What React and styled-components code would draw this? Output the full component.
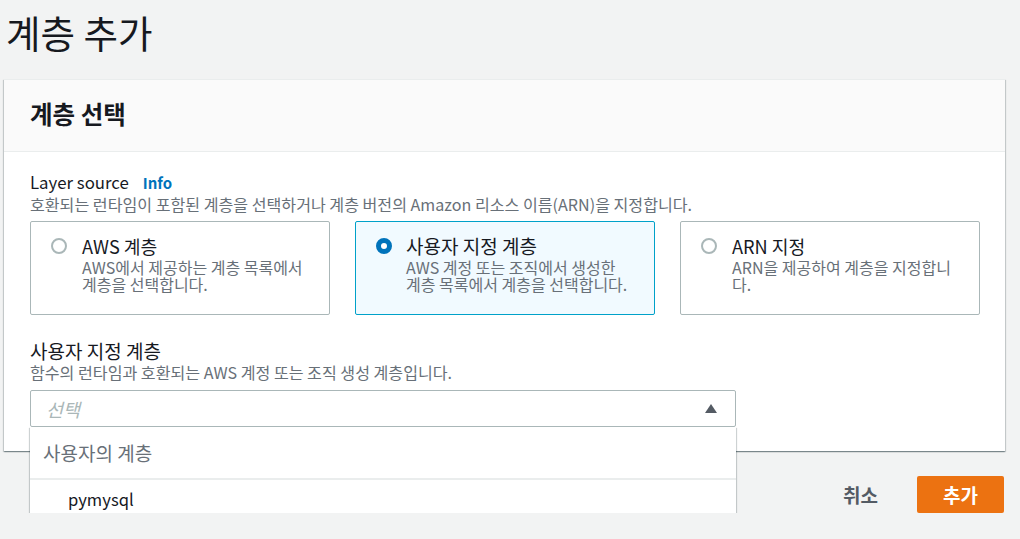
import React from "react";
import styled, { createGlobalStyle } from "styled-components";

const GlobalStyle = createGlobalStyle`
  html, body {
    margin: 0;
    padding: 0;
    background: #f2f3f3;
    min-height: 100%;
  }
  body {
    font-family: "Noto Sans CJK KR", "Noto Sans", sans-serif;
    color: #16191f;
    -webkit-font-smoothing: antialiased;
  }
  * { box-sizing: border-box; }
`;

const Page = styled.div`
  width: 1001px;
  margin-left: 4px;
  padding-top: 11px;
  display: flex;
  flex-direction: column;
`;

const PageTitle = styled.h1`
  margin: 0 0 26px 2px;
  font-size: 37.5px;
  line-height: 42px;
  font-weight: 400;
  color: #16191f;
`;

const Container = styled.section`
  background: #ffffff;
  border-top: 1px solid #eaeded;
  box-shadow: 0 1px 1px 0 rgba(0, 28, 36, 0.3), 1px 1px 1px 0 rgba(0, 28, 36, 0.15),
    -1px 1px 1px 0 rgba(0, 28, 36, 0.15);
`;

const ContainerHeader = styled.header`
  background: #fafafa;
  border-bottom: 1px solid #eaeded;
  padding: 19px 26px 22px;
`;

const HeaderTitle = styled.h2`
  margin: 0;
  font-size: 24.5px;
  line-height: 30px;
  font-weight: 700;
  color: #16191f;
`;

const ContainerBody = styled.div`
  padding: 19px 25px 24px 26px;
  display: flex;
  flex-direction: column;
`;

const Label = styled.div`
  display: flex;
  align-items: baseline;
  font-size: ${(p) => (p.$ko ? "19px" : "16.8px")};
  line-height: 22px;
  color: #16191f;
  margin-top: ${(p) => p.$top || 0}px;
`;

const InfoLink = styled.a`
  margin-left: 14px;
  font-size: 15px;
  font-weight: 700;
  color: #0073bb;
  text-decoration: none;
`;

const Description = styled.div`
  font-size: 16.1px;
  line-height: 20px;
  color: #687078;
`;

const Tiles = styled.div`
  margin-top: 7px;
  display: grid;
  grid-template-columns: repeat(3, 300px);
  column-gap: 25px;
`;

const Tile = styled.div`
  height: 94px;
  display: flex;
  align-items: flex-start;
  padding: 13px 20px 0 20px;
  border: 1px solid ${(p) => (p.$selected ? "#00a1c9" : "#aab7b8")};
  background: ${(p) => (p.$selected ? "#f1faff" : "#ffffff")};
  border-radius: 2px;
`;

const Radio = styled.span`
  flex: none;
  width: 16px;
  height: 16px;
  margin-top: 3px;
  margin-right: ${(p) => (p.$checked ? "14px" : "15px")};
  border-radius: 50%;
  background: #ffffff;
  border: ${(p) => (p.$checked ? "5px solid #0073bb" : "2px solid #aab7b8")};
`;

const TileText = styled.div`
  display: flex;
  flex-direction: column;
`;

const TileTitle = styled.div`
  font-size: ${(p) => (p.$latin ? "18.2px" : "19px")};
  line-height: 22px;
  color: #16191f;
`;

const TileDesc = styled.div`
  margin-top: 2px;
  font-size: 16px;
  line-height: 17px;
  color: #687078;
`;

const SelectWrap = styled.div`
  position: relative;
  width: 706px;
  margin-top: 8px;
`;

const SelectBox = styled.div`
  height: 37px;
  border: 1px solid #aab7b8;
  border-radius: 2px;
  background: #ffffff;
  display: flex;
  align-items: center;
  justify-content: space-between;
  padding: 0 18px 0 15px;
`;

const Placeholder = styled.span`
  font-size: 18.5px;
  font-style: italic;
  color: #aab7b8;
`;

const Caret = styled.svg`
  width: 12px;
  height: 9px;
  display: block;
`;

const Menu = styled.div`
  position: absolute;
  left: 0;
  right: 0;
  top: 37px;
  background: #ffffff;
  z-index: 2;
  box-shadow: 0 1px 1px 0 rgba(0, 28, 36, 0.3), 1px 1px 1px 0 rgba(0, 28, 36, 0.15),
    -1px 1px 1px 0 rgba(0, 28, 36, 0.15);
  display: flex;
  flex-direction: column;
`;

const MenuGroup = styled.div`
  height: 53px;
  display: flex;
  align-items: center;
  padding-left: 13px;
  font-size: 19px;
  color: #687078;
  border-bottom: 2px solid #eaeded;
`;

const MenuOption = styled.div`
  height: 37px;
  display: flex;
  align-items: center;
  padding-left: 38px;
  font-size: 16.6px;
  color: #16191f;
`;

const Footer = styled.div`
  margin-top: 25px;
  display: flex;
  justify-content: flex-end;
  align-items: center;
  gap: 19px;
  padding-right: 1px;
`;

const LinkButton = styled.button`
  border: none;
  background: transparent;
  font-family: inherit;
  font-size: 19px;
  font-weight: 700;
  color: #545b64;
  padding: 0 20px;
  height: 37px;
  cursor: pointer;
`;

const PrimaryButton = styled.button`
  width: 87px;
  height: 37px;
  border: none;
  border-radius: 2px;
  background: #ec7211;
  color: #ffffff;
  font-family: inherit;
  font-size: 19px;
  font-weight: 700;
  cursor: pointer;
`;

const tiles = [
  { title: "AWS 계층", latin: true, desc: ["AWS에서 제공하는 계층 목록에서", "계층을 선택합니다."] },
  { title: "사용자 지정 계층", desc: ["AWS 계정 또는 조직에서 생성한", "계층 목록에서 계층을 선택합니다."], selected: true },
  { title: "ARN 지정", latin: true, desc: ["ARN을 제공하여 계층을 지정합니", "다."] },
];

export default function App() {
  return (
    <>
      <GlobalStyle />
      <Page>
        <PageTitle>계층 추가</PageTitle>
        <Container>
          <ContainerHeader>
            <HeaderTitle>계층 선택</HeaderTitle>
          </ContainerHeader>
          <ContainerBody>
            <Label>
              Layer source
              <InfoLink href="#">Info</InfoLink>
            </Label>
            <Description>
              호환되는 런타임이 포함된 계층을 선택하거나 계층 버전의 Amazon 리소스 이름(ARN)을 지정합니다.
            </Description>
            <Tiles>
              {tiles.map((t) => (
                <Tile key={t.title} $selected={t.selected}>
                  <Radio $checked={t.selected} />
                  <TileText>
                    <TileTitle $latin={t.latin}>{t.title}</TileTitle>
                    <TileDesc>
                      {t.desc[0]}
                      <br />
                      {t.desc[1]}
                    </TileDesc>
                  </TileText>
                </Tile>
              ))}
            </Tiles>
            <Label $ko $top={25}>사용자 지정 계층</Label>
            <Description>함수의 런타임과 호환되는 AWS 계정 또는 조직 생성 계층입니다.</Description>
            <SelectWrap>
              <SelectBox>
                <Placeholder>선택</Placeholder>
                <Caret viewBox="0 0 12 9">
                  <polygon points="6,0 12,9 0,9" fill="#545b64" />
                </Caret>
              </SelectBox>
              <Menu>
                <MenuGroup>사용자의 계층</MenuGroup>
                <MenuOption>pymysql</MenuOption>
              </Menu>
            </SelectWrap>
          </ContainerBody>
        </Container>
        <Footer>
          <LinkButton>취소</LinkButton>
          <PrimaryButton>추가</PrimaryButton>
        </Footer>
      </Page>
    </>
  );
}
